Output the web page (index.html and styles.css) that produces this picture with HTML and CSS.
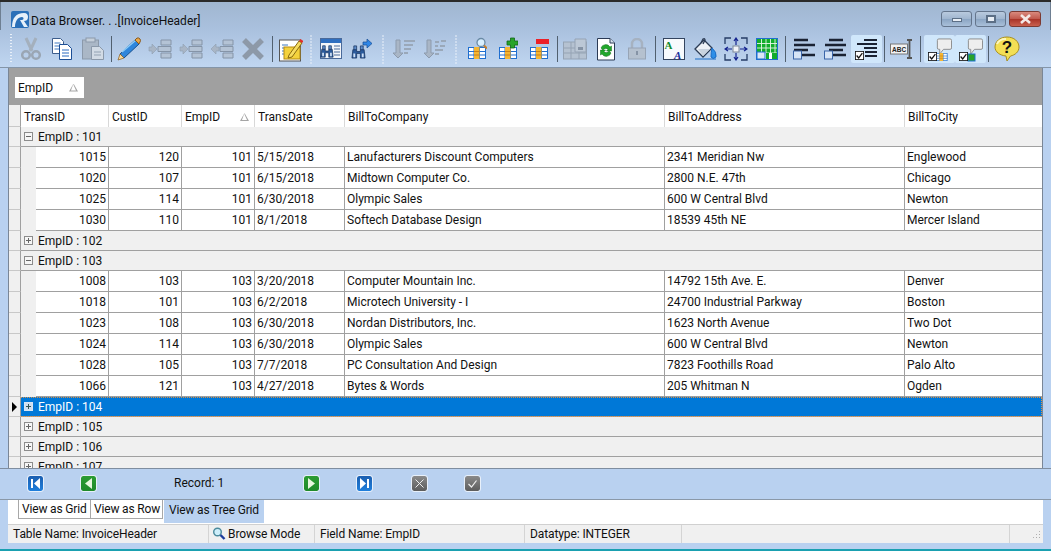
FILE: index.html
```html
<!DOCTYPE html>
<html lang="en">
<head>
<meta charset="utf-8">
<title>Data Browser</title>
<link rel="stylesheet" href="styles.css">
</head>
<body>
<svg class="defs" width="0" height="0">
  <defs>
    <symbol id="tbl" viewBox="0 0 18 12">
      <rect x=".5" y=".5" width="17" height="11" fill="#fff" stroke="#1f6fd0"/>
      <path d="M0 4.5h18M0 8h18M6 0v12M11.500 0v12" stroke="#1f6fd0"/>
      <rect x="6" y="0" width="5.500" height="12" fill="#f5b632"/>
      <path d="M6 4.500h5.500M6 8h5.500" stroke="#c9801a"/>
    </symbol>
    <symbol id="brick" viewBox="0 0 24 20">
      <path d="M1 8h3V5l5 5-5 5v-3H1z" fill="#a9b6c6" stroke="#8f9eb0" stroke-width=".6"/>
      <path d="M13 1h10v5H13zM10 7.500h13v5H10zM13 14h10v5H13z" fill="#b4c3d5" stroke="#8594a7"/>
    </symbol>
    <symbol id="chk" viewBox="0 0 11 11">
      <rect x=".5" y=".5" width="10" height="10" fill="#fff" stroke="#111"/>
      <path d="M2 5.500l2.500 3L9 2.500" fill="none" stroke="#111" stroke-width="1.500"/>
    </symbol>
    <symbol id="bino" viewBox="0 0 16 16">
      <path d="M2 6h4v2h4V6h4l1 9h-5V10H6v5H1z" fill="#2c5b9c" stroke="#17335f" stroke-width=".8"/>
      <path d="M3 2h3v4H3zM10 2h3v4h-3z" fill="#5d8ccb" stroke="#17335f" stroke-width=".8"/>
      <path d="M2.500 10h2v4h-2zM11.500 10h2v4h-2z" fill="#cfe0f5"/>
    </symbol>
    <symbol id="bubble" viewBox="0 0 18 18">
      <path d="M4 1h12q1.500 0 1.500 1.500v8q0 1.500-1.500 1.500h-7l-4 5v-5H4q-1.500 0-1.500-1.500v-8Q2.500 1 4 1z" fill="#eeeeee" stroke="#8a8a8a"/>
    </symbol>
  </defs>
</svg>
<div class="window">
  <header class="titlebar">
    <svg class="logo" width="18" height="17" viewBox="0 0 18 17"><rect width="18" height="17" rx="2" fill="#2a6fb8"/><path d="M1 16C1 7 5 2 13 2c3 0 4 2 4 4 0 3-2 4-4 4l4 6h-4l-4-7h2c2 0 2-3 0-3-4 0-7 4-7 10z" fill="#e6f0fa"/></svg>
    <span class="title">Data Browser. . .[InvoiceHeader]</span>
    <div class="winbtns">
      <span class="winbtn"><i class="wmin"></i></span>
      <span class="winbtn"><i class="wmax"></i></span>
      <span class="winbtn close"><svg width="13" height="10" viewBox="0 0 13 10"><path d="M2 1l9 8M11 1l-9 8" stroke="#f4e8e6" stroke-width="2.600"/></svg></span>
    </div>
  </header>
  <nav class="toolbar">
    <i class="grip first"></i>
    <span class="tb"><svg width="20" height="24" viewBox="0 0 20 24"><path d="M5 1l6 13M15 1L9 14" stroke="#a4b0bd" stroke-width="3"/><circle cx="5" cy="18" r="3.800" fill="none" stroke="#9aa6b4" stroke-width="2.500"/><circle cx="15" cy="18" r="3.800" fill="none" stroke="#9aa6b4" stroke-width="2.500"/></svg></span>
    <span class="tb"><svg width="22" height="24" viewBox="0 0 22 24"><path d="M1.500 1.500h8l3 3v12h-11z" fill="#fff" stroke="#3c5d8c"/><path d="M3.500 6h6M3.500 9h6M3.500 12h6" stroke="#3f78c0"/><path d="M8.500 7.500h8l4 4v11h-12z" fill="#fff" stroke="#1d4f96"/><path d="M11 13h7M11 16h7M11 19h7" stroke="#2b6bc0"/></svg></span>
    <span class="tb"><svg width="24" height="24" viewBox="0 0 24 24"><rect x="1.500" y="3" width="16" height="19" fill="#aab7c6" stroke="#8b99aa"/><rect x="5" y="1" width="9" height="4" fill="#c5cfda" stroke="#8b99aa"/><path d="M10.500 9.500h8l4 4v9h-12z" fill="#d2dbe5" stroke="#8b99aa"/><path d="M13 15h7M13 18h7" stroke="#93a2b3"/></svg></span>
    <i class="sep"></i>
    <span class="tb"><svg width="26" height="24" viewBox="0 0 26 24"><path d="M4 17L19 3l4 4L8 21z" fill="#2f86dc" stroke="#17508f"/><path d="M6 15L20 3" stroke="#8fcdf8" stroke-width="1.500"/><path d="M19 3l2-2q2-.5 3 1t0 3l-1 2z" fill="#e8a64a" stroke="#8a5a1c"/><path d="M4 17l4 4-6 2z" fill="#f7d89a" stroke="#8a5a1c" stroke-width=".7"/></svg></span>
    <span class="tb"><svg width="24" height="20"><use href="#brick"/></svg></span>
    <span class="tb"><svg width="24" height="20"><use href="#brick"/></svg></span>
    <span class="tb"><svg width="24" height="20" viewBox="0 0 24 20"><path d="M9 8H6V5l-5 5 5 5v-3h3z" fill="#a9b6c6" stroke="#8f9eb0" stroke-width=".6"/><path d="M13 1h10v5H13zM10 7.500h13v5H10zM13 14h10v5H13z" fill="#b4c3d5" stroke="#8594a7"/></svg></span>
    <span class="tb"><svg width="24" height="22" viewBox="0 0 24 22"><path d="M3 2l18 18M21 2L3 20" stroke="#8d99a8" stroke-width="5.500"/></svg></span>
    <i class="sep w7"></i>
    <span class="tb"><svg width="24" height="26" viewBox="0 0 24 26"><rect x=".5" y="4" width="21" height="21" fill="#fff" stroke="#555"/><path d="M3 9h6M3 12h5M3 15h4M3 18h4" stroke="#3f78c0"/><rect x="5" y="11" width="16" height="12" fill="#f4d23c" stroke="#b58a10"/><path d="M10 19L20 5l3 2-10 14-4 1z" fill="#f6dc60" stroke="#8a6a10"/><path d="M20 5l1.500-2 3 2-1.500 2z" fill="#e0302a"/></svg></span>
    <i class="grip"></i>
    <span class="tb"><svg width="22" height="22" viewBox="0 0 22 22"><rect x=".5" y=".5" width="21" height="20" fill="#f4f6fa" stroke="#4a6a9a"/><rect x="1" y="1" width="20" height="4" fill="#2f6fc0"/><path d="M14 8h6M14 11h6M14 14h6M14 17h6" stroke="#4a6a9a"/><use href="#bino" x="0" y="6" width="14" height="14"/></svg></span>
    <span class="tb"><svg width="22" height="22" viewBox="0 0 22 22"><use href="#bino" x="0" y="6" width="15" height="15"/><path d="M12 4h4V1l5 4.500L16 10V7h-4z" fill="#2f86e6" stroke="#154a90" stroke-width=".7"/></svg></span>
    <i class="grip wide"></i>
    <span class="tb"><svg width="24" height="20" viewBox="0 0 24 20"><path d="M4 1v13H1l5 5 5-5H8V1z" fill="#a9b6c6" stroke="#8d9bad"/><path d="M12 2h11M12 6h9M12 10h7M12 14h4" stroke="#9aa8b9" stroke-width="2.200"/></svg></span>
    <span class="tb"><svg width="24" height="20" viewBox="0 0 24 20"><path d="M4 1v13H1l5 5 5-5H8V1z" fill="#a9b6c6" stroke="#8d9bad"/><path d="M12 3h4M18 2h5M12 7h3M17 7h5M12 11h8M12 15h4" stroke="#9aa8b9" stroke-width="2.200"/></svg></span>
    <i class="grip wide"></i>
    <span class="tb"><svg width="20" height="23" viewBox="0 0 20 23"><use href="#tbl" x="1" y="10" width="18" height="12"/><circle cx="14" cy="5.500" r="4" fill="#d9f0ff" stroke="#6a8aa5" stroke-width="1.300"/><path d="M17 8.500l3 3" stroke="#c9802a" stroke-width="2"/></svg></span>
    <span class="tb"><svg width="20" height="23" viewBox="0 0 20 23"><use href="#tbl" x="1" y="10" width="18" height="12"/><path d="M9 4h3.500V1h4v3H20v4h-3.500v3h-4V8H9z" fill="#27a32a" stroke="#136616" stroke-width=".8"/></svg></span>
    <span class="tb"><svg width="20" height="23" viewBox="0 0 20 23"><use href="#tbl" x="1" y="10" width="18" height="12"/><rect x="7" y="2" width="13" height="5" fill="#ec2027"/></svg></span>
    <i class="sep"></i>
    <span class="tb"><svg width="24" height="22" viewBox="0 0 24 22"><rect x=".5" y="4" width="23" height="17" fill="#b5c2d1" stroke="#95a3b4"/><path d="M0 10h24M0 15h24M8 4v17M16 4v17" stroke="#95a3b4"/><path d="M12 1h11v13H12z" fill="#bcc8d6" stroke="#95a3b4"/><rect x="15" y="9" width="5" height="3" fill="#8593a5"/></svg></span>
    <span class="tb"><svg width="20" height="24" viewBox="0 0 20 24"><path d="M1.500 1.500H14l4.500 4.500v17h-17z" fill="#fff" stroke="#2b3a55"/><path d="M14 1.500V6h4.500" fill="#d8e4f0" stroke="#2b3a55"/><path d="M5 11a5 5 0 0 1 9-1l1.500-1v5h-5l1.500-1.500a3 3 0 0 0-5 .5zM15 16a5 5 0 0 1-9 1l-1.500 1v-5h5L8 14.500a3 3 0 0 0 5-.5z" fill="#22a82c" stroke="#0f6d18" stroke-width=".5"/></svg></span>
    <span class="tb"><svg width="20" height="22" viewBox="0 0 20 22"><path d="M5 10V6a5 5 0 0 1 10 0v4" fill="none" stroke="#a6b2c1" stroke-width="2.500"/><rect x="1.500" y="10" width="17" height="11" fill="#b5c1cf" stroke="#97a4b5"/><rect x="9" y="13" width="2" height="4" fill="#8593a5"/></svg></span>
    <i class="sep w6"></i>
    <span class="tb"><svg width="22" height="22" viewBox="0 0 22 22"><rect x=".5" y=".5" width="21" height="21" fill="#f7fafd" stroke="#33445f"/><text x="1.500" y="11" class="ia">A</text><text x="11" y="20.500" class="ib">A</text></svg></span>
    <span class="tb"><svg width="24" height="24" viewBox="0 0 24 24"><path d="M2 12L11 3l8 8-9 9z" fill="#eef2f7" stroke="#2c3c55" stroke-width="1.300"/><path d="M8 6l2-4q2-1 2 1l-2 4" fill="none" stroke="#2c3c55" stroke-width="1.300"/><path d="M5 12h12l-7 7z" fill="#c9d3df"/><path d="M19 11q5 4 4 9-3 3-5 0 0-4 1-9zM2 22h21" fill="#2f8fe8" stroke="#1b6dc6"/></svg></span>
    <span class="tb"><svg width="24" height="24" viewBox="0 0 24 24"><path d="M1 7V1h6M17 1h6v6M23 17v6h-6M7 23H1v-6" fill="none" stroke="#263d66" stroke-width="1.300"/><rect x="9" y="9" width="6" height="6" fill="#f1f4f8" stroke="#7c8798"/><path d="M12 8V2M10 4l2-3 2 3M12 16v6M10 20l2 3 2-3M8 12H2M4 10l-3 2 3 2M16 12h6M20 10l3 2-3 2" fill="none" stroke="#14238e" stroke-width="1.200"/></svg></span>
    <span class="tb"><svg width="22" height="22" viewBox="0 0 22 22"><rect x=".5" y=".5" width="21" height="21" fill="#fff" stroke="#1f6fd0"/><path d="M1 1h20v14H8v6H1z" fill="#12ad2b"/><path d="M1 5.500h20M1 10h20M5.500 1v14M10 1v20M14.500 1v20M19 1v20M1 15h20" stroke="#e8f5ea" stroke-width=".9"/><rect x="1" y="14" width="8" height="7" fill="#dbe7f6" stroke="#1f6fd0"/><path d="M10 15h11v6H10z" fill="#12ad2b"/><path d="M13 15h3v6h-3z" fill="#fff"/></svg></span>
    <i class="sep w6"></i>
    <span class="tb"><svg width="22" height="22" viewBox="0 0 22 22"><path d="M1 2h14M1 7h21M1 12h14M9 17h13" stroke="#1a2233" stroke-width="2.400" fill="none"/><rect x=".5" y="13" width="8" height="8" fill="#d6e4f6" stroke="#3a65a8"/></svg></span>
    <span class="tb"><svg width="22" height="22" viewBox="0 0 22 22"><path d="M5 2h14M1 7h21M5 12h14M9 17h13" stroke="#1a2233" stroke-width="2.400" fill="none"/><rect x=".5" y="13" width="8" height="8" fill="#d6e4f6" stroke="#3a65a8"/></svg></span>
    <span class="tb on"><svg width="22" height="22" viewBox="0 0 22 22"><path d="M9 2h13M2 6h20M9 10h13M10 14h12M10 18h12" stroke="#1a2233" stroke-width="2" fill="none"/><use href="#chk" x="0" y="13" width="9" height="9"/></svg></span>
    <i class="sep"></i>
    <span class="tb"><svg width="24" height="22" viewBox="0 0 24 22"><rect x=".5" y="6" width="17" height="10" fill="#f2f2f2" stroke="#777"/><text x="2" y="14" class="iabc">ABC</text><path d="M17 2h5M17 20h5M19.500 2v18" stroke="#555" stroke-width="1.800" fill="none"/></svg></span>
    <i class="sep w6"></i>
    <span class="tb on"><svg width="26" height="26" viewBox="0 0 26 26"><use href="#bubble" x="9" y="2" width="17" height="17"/><use href="#tbl" x="9" y="17" width="13" height="8"/><use href="#chk" x="2" y="16" width="9" height="9"/></svg></span>
    <span class="tb on"><svg width="26" height="26" viewBox="0 0 26 26"><use href="#bubble" x="9" y="2" width="17" height="17"/><rect x="11" y="18" width="7" height="7" fill="#27a32a" stroke="#1f6fd0"/><use href="#chk" x="2" y="16" width="9" height="9"/></svg></span>
    <i class="sep w6"></i>
    <span class="tb"><svg width="26" height="26" viewBox="0 0 26 26"><path d="M13 1c7 0 12 4.500 12 10 0 5-4 8-8.500 9L13 25l-1-5C6 19.500 1 16 1 11 1 5.500 6 1 13 1z" fill="#f3df55" stroke="#a98f20"/><path d="M3 8q2-5 9-5" stroke="#fdf7c0" stroke-width="2" fill="none"/><text x="13" y="17" class="iq">?</text></svg></span>
  </nav>
  <main class="grid">
    <div class="groupband"><div class="chip"><span>EmpID</span><i class="tri"></i></div></div>
    <div class="head cols">
      <div class="hc ind"></div>
      <div class="hc">TransID</div>
      <div class="hc">CustID</div>
      <div class="hc sorted">EmpID<i class="tri"></i></div>
      <div class="hc">TransDate</div>
      <div class="hc">BillToCompany</div>
      <div class="hc">BillToAddress</div>
      <div class="hc">BillToCity</div>
    </div>
    <div class="grp"><i class="ind"></i><i class="exp minus"></i><span>EmpID : 101</span></div>
    <div class="row dcols"><i class="ind"></i><i class="pad"></i><b>1015</b><b>120</b><b>101</b><s>5/15/2018</s><s>Lanufacturers Discount Computers</s><s>2341 Meridian Nw</s><s>Englewood</s></div>
    <div class="row dcols"><i class="ind"></i><i class="pad"></i><b>1020</b><b>107</b><b>101</b><s>6/15/2018</s><s>Midtown Computer Co.</s><s>2800 N.E. 47th</s><s>Chicago</s></div>
    <div class="row dcols"><i class="ind"></i><i class="pad"></i><b>1025</b><b>114</b><b>101</b><s>6/30/2018</s><s>Olympic Sales</s><s>600 W Central Blvd</s><s>Newton</s></div>
    <div class="row dcols"><i class="ind"></i><i class="pad"></i><b>1030</b><b>110</b><b>101</b><s>8/1/2018</s><s>Softech Database Design</s><s>18539 45th NE</s><s>Mercer Island</s></div>
    <div class="grp"><i class="ind"></i><i class="exp"></i><span>EmpID : 102</span></div>
    <div class="grp"><i class="ind"></i><i class="exp minus"></i><span>EmpID : 103</span></div>
    <div class="row dcols"><i class="ind"></i><i class="pad"></i><b>1008</b><b>103</b><b>103</b><s>3/20/2018</s><s>Computer Mountain Inc.</s><s>14792 15th Ave. E.</s><s>Denver</s></div>
    <div class="row dcols"><i class="ind"></i><i class="pad"></i><b>1018</b><b>101</b><b>103</b><s>6/2/2018</s><s>Microtech University - I</s><s>24700 Industrial Parkway</s><s>Boston</s></div>
    <div class="row dcols"><i class="ind"></i><i class="pad"></i><b>1023</b><b>108</b><b>103</b><s>6/30/2018</s><s>Nordan Distributors, Inc.</s><s>1623 North Avenue</s><s>Two Dot</s></div>
    <div class="row dcols"><i class="ind"></i><i class="pad"></i><b>1024</b><b>114</b><b>103</b><s>6/30/2018</s><s>Olympic Sales</s><s>600 W Central Blvd</s><s>Newton</s></div>
    <div class="row dcols"><i class="ind"></i><i class="pad"></i><b>1028</b><b>105</b><b>103</b><s>7/7/2018</s><s>PC Consultation And Design</s><s>7823 Foothills Road</s><s>Palo Alto</s></div>
    <div class="row dcols"><i class="ind"></i><i class="pad"></i><b>1066</b><b>121</b><b>103</b><s>4/27/2018</s><s>Bytes &amp; Words</s><s>205 Whitman N</s><s>Ogden</s></div>
    <div class="grp sel"><i class="ind cur"></i><i class="exp"></i><span>EmpID : 104</span></div>
    <div class="grp"><i class="ind"></i><i class="exp"></i><span>EmpID : 105</span></div>
    <div class="grp"><i class="ind"></i><i class="exp"></i><span>EmpID : 106</span></div>
    <div class="grp"><i class="ind"></i><i class="exp"></i><span>EmpID : 107</span></div>
  </main>
  <div class="pager">
    <span class="pg blue"><svg width="15" height="15" viewBox="0 0 15 15"><path d="M3 3h2v9H3zM12 2v11L6 7.500z" fill="#fff"/></svg></span>
    <span class="pg green m38"><svg width="15" height="15" viewBox="0 0 15 15"><path d="M11 2v11L4 7.500z" fill="#e8f7e0"/></svg></span>
    <span class="rec">Record: 1</span>
    <span class="pg green m81"><svg width="15" height="15" viewBox="0 0 15 15"><path d="M4 2v11l7-5.500z" fill="#e8f7e0"/></svg></span>
    <span class="pg blue m38"><svg width="15" height="15" viewBox="0 0 15 15"><path d="M3 2v11l6-5.500zM10 3h2v9h-2z" fill="#fff"/></svg></span>
    <span class="pg grey m40"><svg width="15" height="15" viewBox="0 0 15 15"><path d="M3.500 3.500l8 8M11.500 3.500l-8 8" stroke="#eee" stroke-width="1"/></svg></span>
    <span class="pg grey m38"><svg width="15" height="15" viewBox="0 0 15 15"><path d="M3.500 8l3 3 5-6.500" fill="none" stroke="#eee" stroke-width="1.200"/></svg></span>
  </div>
  <div class="tabs">
    <span class="tab">View as Grid</span>
    <span class="tab">View as Row</span>
    <span class="tab active">View as Tree Grid</span>
  </div>
  <footer class="status">
    <span class="st s1">Table Name: InvoiceHeader</span>
    <span class="st s2"><svg width="14" height="14" viewBox="0 0 14 14"><circle cx="5.500" cy="5" r="3.800" fill="#cdeefa" stroke="#4b8a9c" stroke-width="1.400"/><path d="M8.500 8l4 4" stroke="#1c3c9c" stroke-width="2.400"/></svg>Browse Mode</span>
    <span class="st s3">Field Name: EmpID</span>
    <span class="st s4">Datatype: INTEGER</span>
    <span class="st s5"></span>
    <span class="st s6"><i class="sizegrip"></i></span>
  </footer>
</div>
</body>
</html>
```
FILE: styles.css
```css
* { box-sizing: border-box; }
html, body { margin: 0; height: 551px; overflow: hidden; }
body { font-family: Roboto, "Open Sans", sans-serif; font-size: 12px; color: #111; }
.defs { position: absolute; }
.window {
  width: 1051px; height: 551px; display: flex; flex-direction: column;
  background: #b9d1f0; border-top: 2px solid #2a2a2a;
  border-bottom: 2px solid #1aa0b0;
}
.titlebar {
  height: 28px; flex: none; display: flex; align-items: center;
  padding: 4px 10px 0 10px;
  background: linear-gradient(#a0b6d0, #aac1de);
  border-left: 1px solid #6e7f92; border-right: 1px solid #6e7f92;
}
.logo { flex: none; margin-top: 3px; }
.title { margin-left: 2px; margin-top: 5px; font-size: 12px; color: #111; }
.winbtns { margin-left: auto; display: flex; gap: 3px; margin-top: 1px; margin-right: -1px; }
.winbtn {
  width: 31px; height: 16px; display: flex; align-items: center; justify-content: center;
  background: linear-gradient(#b9cade, #9fb5cf 50%, #8ba5c3 52%, #a9c0da);
  border: 1px solid #64758c; border-radius: 3px;
}
.wmin { width: 10px; height: 4px; background: #e8eef5; border: 1px solid #5c6f86; margin-top: 3px; }
.wmax { width: 10px; height: 8px; background: #e8eef5; border: 2px solid #5c6f86; }
.winbtn.close { width: 32px; background: linear-gradient(#d98a7e, #c0574b 50%, #a93428 52%, #c9604e); border-color: #7c3a32; }
.toolbar {
  height: 38px; flex: none; display: flex; align-items: center;
  padding-left: 8px;
  background: linear-gradient(#aac1de, #c0d6f1);
  border-bottom: 1px solid #8495a8;
}
.tb { width: 31px; height: 28px; flex: none; display: flex; align-items: center; justify-content: center; }
.tb.on { background: #d0e7fb; border-radius: 2px; }
.sep { width: 5px; height: 26px; flex: none; background: linear-gradient(#51606f, #51606f) center / 1px 100% no-repeat; }
.sep.w6 { width: 6px; }
.sep.w7 { width: 7px; }
.grip { width: 9px; height: 30px; flex: none; background: linear-gradient(#e9f0f9 50%, transparent 50%) center / 2px 3px repeat-y; }
.grip.first { width: 7.500px; background-position: 2px 0; }
.grip.wide { width: 11px; }
.ia { font: bold 11px "Liberation Serif", serif; fill: #138a2c; }
.ib { font: italic bold 11px "Liberation Serif", serif; fill: #1a2f9c; }
.iabc { font: bold 6.500px "Liberation Sans", sans-serif; fill: #222; }
.iq { font: bold 17px "Liberation Sans", sans-serif; fill: #111; text-anchor: middle; }

.grid {
  height: 400px; flex: none; margin: 0 8px; overflow: hidden; background: #f0f0f0;
  border-right: 1px solid #7a8696; border-left: 1px solid #7a8696;
}
.groupband { height: 37px; background: #a0a0a0; padding: 9px 0 0 6px; }
.chip {
  width: 69px; height: 21px; background: #fff; display: flex; align-items: center;
  justify-content: space-between; padding: 0 6px 0 3px;
}
.tri { width: 9px; height: 8px; display: block; background: #a5a5a5; clip-path: polygon(50% 0, 100% 100%, 0 100%, 50% 0, 22% 88%, 78% 88%, 50% 18%); }
.cols { display: grid; grid-template-columns: 12px 88px 73px 73px 90px 320px 240px 137px; }
.dcols { display: grid; grid-template-columns: 12px 15px 73px 73px 73px 90px 320px 240px 137px; }
.head { height: 22px; background: #fff; }
.hc { padding: 2px 3px 0; line-height: 20px; border-right: 1px solid #d8d8d8; display: flex; justify-content: space-between; align-items: center; }
.hc:last-child { border-right: 0; }
.hc.ind { background: #f0f0f0; }
.hc.sorted .tri { margin-right: 2px; }
.row { height: 21px; background: #fff; line-height: 21px; }
.row b, .row s { font-weight: normal; text-decoration: none; padding: 0 2px; border-right: 1px solid #a0a0a0; border-bottom: 1px solid #a0a0a0; white-space: nowrap; overflow: hidden; }
.row b { text-align: right; }
.row s:last-child { border-right: 0; }
.ind { display: block; width: 12px; flex: none; background: #f0f0f0; border-bottom: 1px solid #c8c8c8; border-right: 1px solid #a0a0a0; }
.pad { display: block; background: #f0f0f0; border-bottom: 1px solid #f0f0f0; }
.grp { height: 20px; display: flex; align-items: center; background: #f0f0f0; border-bottom: 1px solid #a0a0a0; }
.grp .ind { height: 20px; }
.exp { display: block; width: 9px; height: 9px; margin: 0 5px 0 3px; border: 1px solid #8c8c8c; background: linear-gradient(#666, #666) center / 5px 1px no-repeat, linear-gradient(#666, #666) center / 1px 5px no-repeat, #f6f6f6; }
.exp.minus { background: linear-gradient(#666, #666) center / 5px 1px no-repeat, #f6f6f6; }
.grp.sel { background: #0078d7; color: #fff; outline: 1px dotted #d8914a; outline-offset: -1px; }
.grp.sel .ind { background: #f0f0f0; }
.ind.cur { position: relative; }
.ind.cur::after { content: ""; position: absolute; left: 3px; top: 5px; border-left: 5px solid #000; border-top: 5px solid transparent; border-bottom: 5px solid transparent; }
.grp.sel .exp { border-color: #d8e6f4; background: linear-gradient(#355, #355) center / 5px 1px no-repeat, linear-gradient(#355, #355) center / 1px 5px no-repeat, #cfe0f0; }

.pager { height: 32px; flex: none; display: flex; align-items: center; padding: 0 0 2px 28px; background: #b9d1f0; border-top: 1px solid #7f8ea0; border-bottom: 1px solid #8a98a8; }
.pg { width: 15px; height: 15px; flex: none; display: block; border-radius: 2px; outline: 1px solid #e8f0fa; }
.pg svg { display: block; }
.pg.blue { background: linear-gradient(#1a5eb0, #1f7fdc); }
.pg.green { background: linear-gradient(#2c9c34, #1f8a2a); }
.pg.grey { background: linear-gradient(#8a8a8a, #5c5c5c); }
.m38 { margin-left: 38px; }
.m40 { margin-left: 40px; }
.m81 { margin-left: 81px; }
.rec { width: 49px; margin-left: 78px; white-space: nowrap; }
.tabs { height: 24px; flex: none; margin: 0 8px; background: #fff; display: flex; align-items: flex-start; padding-left: 10px; letter-spacing: -0.16px; }
.tab { height: 19px; padding: 0 3px; line-height: 18px; background: #fff; border: 1px solid #a8a8a8; border-top: 0; white-space: nowrap; width: 73px; }
.tab + .tab { border-left: 0; width: 72px; }
.tab.active { height: 23px; width: 101px; background: #b9d1f0; border: 0; border-left: 1px solid #fff; line-height: 20px; padding: 0 5px; }
.status { height: 19px; flex: none; margin: 0 8px 6px; background: #f0f0f0; display: flex; border-top: 1px solid #d0d0d0; letter-spacing: -0.1px; }
.st { display: flex; align-items: center; gap: 2px; padding-left: 5px; border-right: 1px solid #d4d4d4; white-space: nowrap; }
.s1 { width: 201px; }
.s2 { width: 106px; padding-left: 3px; }
.s3 { width: 210px; }
.s4 { width: 157px; }
.s5 { width: 328px; }
.s6 { flex: 1; border-right: 0; justify-content: flex-end; padding-right: 2px; }
.sizegrip { width: 9px; height: 9px; display: block; background: radial-gradient(circle, #aaa 1px, transparent 1px) 0 0 / 3px 3px; clip-path: polygon(100% 0, 100% 100%, 0 100%); }
```
